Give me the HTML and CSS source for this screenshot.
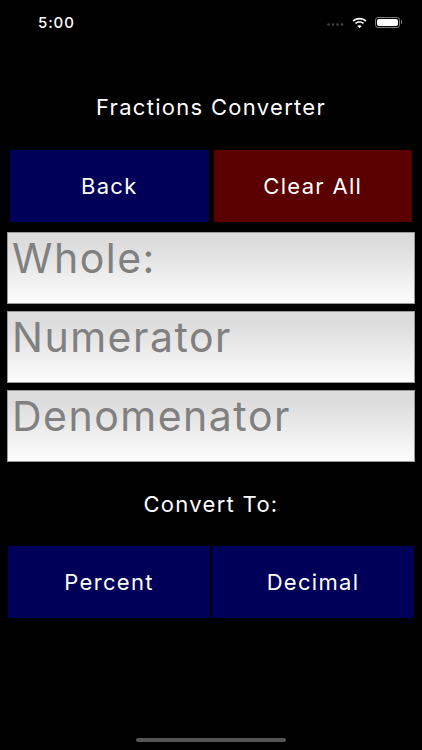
FILE: index.html
```html
<!DOCTYPE html>
<html lang="en">
<head>
  <meta charset="UTF-8">
  <meta name="viewport" content="width=device-width, initial-scale=1.0">
  <title>Fractions Converter</title>
  <link rel="stylesheet" href="styles.css">
</head>
<body>
  <!-- Status bar -->
  <div class="status-bar">
    <span class="time">5:00</span>
    <div class="status-icons">
      <svg class="signal" width="18" height="3" viewBox="0 0 18 3"><g fill="#444"><circle cx="1.5" cy="1.5" r="1.3"/><circle cx="6" cy="1.5" r="1.3"/><circle cx="10.5" cy="1.5" r="1.3"/><circle cx="15" cy="1.5" r="1.3"/></g></svg>
      <svg class="wifi" width="17" height="12" viewBox="0 0 17 13"><path fill="#fff" d="M8.5 2.6c2.4 0 4.6.9 6.3 2.500l1.200-1.300C14 1.900 11.400.8 8.500.8S3 1.900 1 3.800l1.200 1.300C3.900 3.500 6.100 2.600 8.500 2.600zM8.500 6.300c1.400 0 2.700.5 3.700 1.400l1.300-1.300C12.200 5.200 10.400 4.500 8.500 4.500s-3.700.7-5 1.900l1.300 1.300c1-.9 2.300-1.400 3.700-1.400zM8.500 12.300l2.300-2.500c-.6-.5-1.400-.9-2.300-.9s-1.700.4-2.300.9z"/></svg>
      <div class="battery"><div class="battery-level"></div></div>
    </div>
  </div>

  <h1 class="page-title">Fractions Converter</h1>

  <div class="top-buttons">
    <button class="btn btn-blue">Back</button>
    <button class="btn btn-red">Clear All</button>
  </div>

  <div class="fields">
    <div class="field">Whole:</div>
    <div class="field">Numerator</div>
    <div class="field">Denomenator</div>
  </div>

  <p class="convert-label">Convert To:</p>

  <div class="convert-buttons">
    <button class="btn btn-blue">Percent</button>
    <button class="btn btn-blue">Decimal</button>
  </div>

  <div class="home-bar"></div>
</body>
</html>
```

FILE: styles.css
```css
body {
  font-family: 'Inter', 'Liberation Sans', sans-serif;
  margin: 0;
  padding: 0;
  background: #000;
  color: #fff;
  width: 422px;
  height: 750px;
  overflow: hidden;
  position: relative;
}

/* Status bar */
.status-bar {
  display: flex;
  justify-content: space-between;
  align-items: center;
  height: 15px;
  padding: 15px 22px 0 38px;
}

.time {
  font-size: 15px;
  font-weight: 500;
  letter-spacing: 0.9px;
}

.status-icons {
  display: flex;
  align-items: center;
}

.signal {
  margin-right: 6px;
  margin-top: 4px;
}

.wifi {
  margin-right: 7px;
}

.battery {
  width: 21px;
  height: 7px;
  padding: 1px;
  border: 1px solid #777;
  border-radius: 3px;
  position: relative;
}

.battery::after {
  content: "";
  position: absolute;
  right: -3px;
  top: 2px;
  width: 1px;
  height: 4px;
  background: #777;
}

.battery-level {
  width: 100%;
  height: 100%;
  background: #fff;
  border-radius: 2px;
}

.page-title {
  font-size: 22px;
  font-weight: 400;
  text-align: center;
  letter-spacing: 1.3px;
  line-height: 26px;
  margin: 64px 0 0;
}

/* Buttons */
.btn {
  flex: 1;
  height: 72px;
  border: none;
  padding: 0;
  color: #fff;
  font-family: inherit;
  font-size: 22px;
  letter-spacing: 1.3px;
}

.btn-blue {
  background: #000058;
}

.btn-red {
  background: #5a0000;
}

.top-buttons {
  display: flex;
  gap: 5px;
  margin-top: 30px;
  padding: 0 10px;
}

/* Input fields */
.fields {
  display: flex;
  flex-direction: column;
  gap: 7px;
  margin-top: 10px;
  padding: 0 7px;
}

.field {
  height: 70px;
  border: 1px solid #999;
  background: linear-gradient(to bottom, #dcdcdc 15%, #fbfbfb 95%);
  color: #808080;
  font-size: 41px;
  line-height: 50px;
  padding-left: 4px;
  letter-spacing: 1.5px;
}

.convert-label {
  font-size: 22px;
  letter-spacing: 1.3px;
  line-height: 26px;
  text-align: center;
  margin: 29px 0 0;
}

.convert-buttons {
  display: flex;
  gap: 2px;
  margin-top: 29px;
  padding: 0 8px;
}

.home-bar {
  position: absolute;
  left: 136px;
  bottom: 8px;
  width: 150px;
  height: 4px;
  border-radius: 2px;
  background: #555;
}
```
